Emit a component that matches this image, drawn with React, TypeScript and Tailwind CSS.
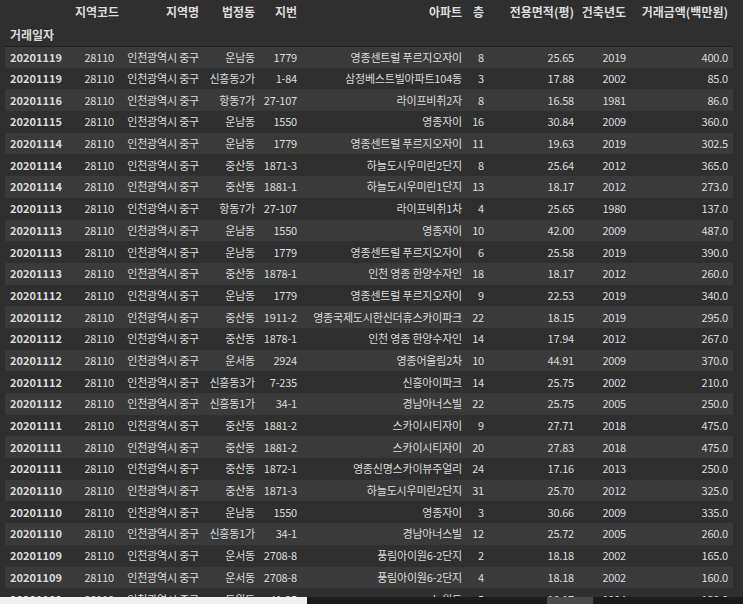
import React from "react";

const rows: string[][] = [
  ["20201119", "28110", "인천광역시 중구", "운남동", "1779", "영종센트럴 푸르지오자이", "8", "25.65", "2019", "400.0"],
  ["20201119", "28110", "인천광역시 중구", "신흥동2가", "1-84", "삼정베스트빌아파트104동", "3", "17.88", "2002", "85.0"],
  ["20201116", "28110", "인천광역시 중구", "항동7가", "27-107", "라이프비취2자", "8", "16.58", "1981", "86.0"],
  ["20201115", "28110", "인천광역시 중구", "운남동", "1550", "영종자이", "16", "30.84", "2009", "360.0"],
  ["20201114", "28110", "인천광역시 중구", "운남동", "1779", "영종센트럴 푸르지오자이", "11", "19.63", "2019", "302.5"],
  ["20201114", "28110", "인천광역시 중구", "중산동", "1871-3", "하늘도시우미린2단지", "8", "25.64", "2012", "365.0"],
  ["20201114", "28110", "인천광역시 중구", "중산동", "1881-1", "하늘도시우미린1단지", "13", "18.17", "2012", "273.0"],
  ["20201113", "28110", "인천광역시 중구", "항동7가", "27-107", "라이프비취1차", "4", "25.65", "1980", "137.0"],
  ["20201113", "28110", "인천광역시 중구", "운남동", "1550", "영종자이", "10", "42.00", "2009", "487.0"],
  ["20201113", "28110", "인천광역시 중구", "운남동", "1779", "영종센트럴 푸르지오자이", "6", "25.58", "2019", "390.0"],
  ["20201113", "28110", "인천광역시 중구", "중산동", "1878-1", "인천 영종 한양수자인", "18", "18.17", "2012", "260.0"],
  ["20201112", "28110", "인천광역시 중구", "운남동", "1779", "영종센트럴 푸르지오자이", "9", "22.53", "2019", "340.0"],
  ["20201112", "28110", "인천광역시 중구", "중산동", "1911-2", "영종국제도시한신더휴스카이파크", "22", "18.15", "2019", "295.0"],
  ["20201112", "28110", "인천광역시 중구", "중산동", "1878-1", "인천 영종 한양수자인", "14", "17.94", "2012", "267.0"],
  ["20201112", "28110", "인천광역시 중구", "운서동", "2924", "영종어울림2차", "10", "44.91", "2009", "370.0"],
  ["20201112", "28110", "인천광역시 중구", "신흥동3가", "7-235", "신흥아이파크", "14", "25.75", "2002", "210.0"],
  ["20201112", "28110", "인천광역시 중구", "신흥동1가", "34-1", "경남아너스빌", "22", "25.75", "2005", "250.0"],
  ["20201111", "28110", "인천광역시 중구", "중산동", "1881-2", "스카이시티자이", "9", "27.71", "2018", "475.0"],
  ["20201111", "28110", "인천광역시 중구", "중산동", "1881-2", "스카이시티자이", "20", "27.83", "2018", "475.0"],
  ["20201111", "28110", "인천광역시 중구", "중산동", "1872-1", "영종신명스카이뷰주얼리", "24", "17.16", "2013", "250.0"],
  ["20201110", "28110", "인천광역시 중구", "중산동", "1871-3", "하늘도시우미린2단지", "31", "25.70", "2012", "325.0"],
  ["20201110", "28110", "인천광역시 중구", "운남동", "1550", "영종자이", "3", "30.66", "2009", "335.0"],
  ["20201110", "28110", "인천광역시 중구", "신흥동1가", "34-1", "경남아너스빌", "12", "25.72", "2005", "260.0"],
  ["20201109", "28110", "인천광역시 중구", "운서동", "2708-8", "풍림아이원6-2단지", "2", "18.18", "2002", "165.0"],
  ["20201109", "28110", "인천광역시 중구", "운서동", "2708-8", "풍림아이원6-2단지", "4", "18.18", "2002", "160.0"],
  ["20201109", "28110", "인천광역시 중구", "도원동", "41-25", "뉴월드", "5", "18.17", "1994", "130.0"],
];

const headers = ["지역코드", "지역명", "법정동", "지번", "아파트", "층", "전용면적(평)", "건축년도", "거래금액(백만원)"];
const widths = ["w-[70px]", "w-[44px]", "w-[85px]", "w-[56px]", "w-[42px]", "w-[165px]", "w-[22px]", "w-[90px]", "w-[52px]", "w-[102px]"];

export default function App() {
  return (
    <div
      className="relative w-[743px] h-[604px] overflow-hidden bg-[#2f2f2f] text-[#dcdcdc] text-[11px] leading-none"
      style={{ fontFamily: '"Noto Sans CJK KR", "Noto Sans", sans-serif' }}
    >
      <table className="ml-[5px] w-[728px] border-collapse table-fixed whitespace-nowrap">
        <colgroup>
          {widths.map((w, i) => (
            <col key={i} className={w} />
          ))}
        </colgroup>
        <thead className="text-[12px]">
          <tr className="h-[24px]">
            <th />
            {headers.map((h) => (
              <th key={h} className="text-right pr-[5px] font-bold">
                {h}
              </th>
            ))}
          </tr>
          <tr className="h-[22px] border-b border-[#1e1e1e]">
            <th className="text-left pl-[5px] font-bold">거래일자</th>
            {headers.map((h) => (
              <th key={h} />
            ))}
          </tr>
        </thead>
        <tbody>
          {rows.map((r, i) => (
            <tr key={i} className={`h-[21.7px] ${i % 2 === 0 ? "bg-[#3a3a3a]" : "bg-[#2f2f2f]"}`}>
              <th className="text-left pl-[5px] font-bold">{r[0]}</th>
              {r.slice(1).map((c, j) => (
                <td key={j} className="text-right pr-[5px] tracking-[-0.2px]">
                  {c}
                </td>
              ))}
            </tr>
          ))}
        </tbody>
      </table>
      <div className="absolute left-0 right-0 bottom-0 h-[7px] flex">
        <div className="w-[307px] bg-[#f0f0f0]" />
        <div className="flex-1 bg-[#1c1c1c] relative">
          <div className="absolute left-[240px] w-[46px] top-0 bottom-0 bg-[#4a4a4a]" />
        </div>
      </div>
    </div>
  );
}
